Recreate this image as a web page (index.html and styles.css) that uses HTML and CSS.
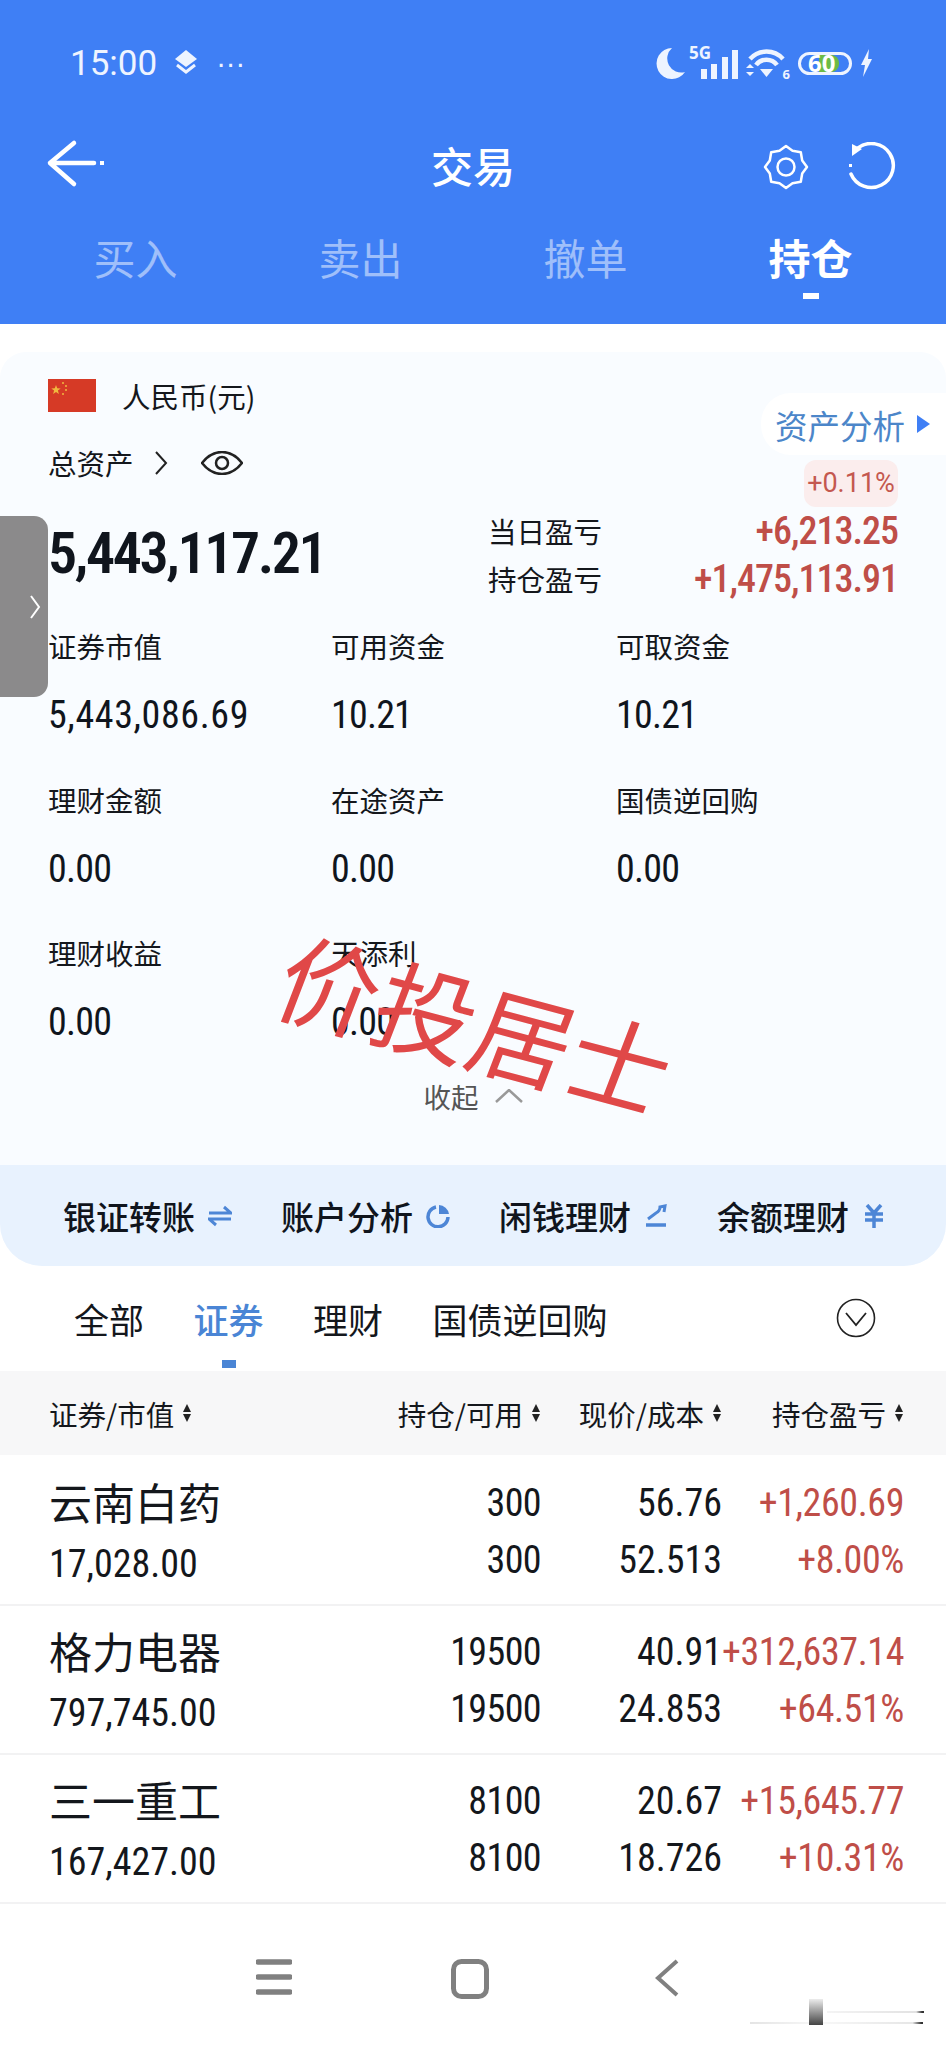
FILE: index.html
```html
<!DOCTYPE html>
<html lang="zh">
<head>
<meta charset="utf-8">
<title>交易</title>
<link rel="stylesheet" href="styles.css">
</head>
<body>
<div class="page">
  <header class="header">
    <div class="status">
      <div class="status-left">
        <span class="time">15:00</span>
        <svg class="layers" viewBox="0 0 24 26"><path d="M12 0 23 9 12 17 1 9Z" fill="#eef4ff"/><path d="M3 15 12 22 21 15" fill="none" stroke="#eef4ff" stroke-width="3"/></svg>
        <span class="dots">···</span>
      </div>
      <div class="status-right">
        <svg class="moon" viewBox="0 0 30 31"><path d="M17 0A15.500 15.500 0 1 0 30 24 14 14 0 0 1 17 0Z" fill="#eef4ff"/></svg>
        <div class="signal">
          <span class="five-g">5G</span>
          <svg class="bars" viewBox="0 0 37 29"><path d="M0 19h6v10H0zM10 14h6v15h-6zM21 7h6v22h-6zM31 0h6v29h-6z" fill="#eef4ff"/></svg>
        </div>
        <div class="wifi">
          <svg viewBox="0 0 41 29"><path d="M4 10A22 22 0 0 1 37 10M10 16A13 13 0 0 1 31 16" fill="none" stroke="#eef4ff" stroke-width="4.500"/><path d="M14 20H27L20.500 28ZM0 19 4 15 8 19ZM0 23 8 23 4 27Z" fill="#eef4ff"/></svg>
          <span class="wifi-num">6</span>
        </div>
        <div class="battery"><span class="battery-fill"></span><span class="battery-num">60</span></div>
        <svg class="bolt" viewBox="0 0 13 28"><path d="M9 0 1 16H5L3 28 12 10H8Z" fill="#eef4ff"/></svg>
      </div>
    </div>
    <nav class="topbar">
      <svg class="back" viewBox="0 0 60 50"><path d="M28 4 4 24 28 45M4 24H48" fill="none" stroke="#fff" stroke-width="4.500" stroke-linecap="round" stroke-linejoin="round"/><rect x="54" y="22" width="4" height="4" fill="#fff"/></svg>
      <h1 class="title">交易</h1>
      <div class="top-actions">
        <svg class="gear" viewBox="0 0 48 48"><path d="M24 3 30.500 7.800 38.800 9.200 40.200 17.500 45 24 40.200 30.500 38.800 38.800 30.500 40.200 24 45 17.500 40.200 9.200 38.800 7.800 30.500 3 24 7.800 17.500 9.200 9.200 17.500 7.800Z" fill="none" stroke="#fff" stroke-width="2.500" stroke-linejoin="round"/><circle cx="24" cy="24" r="8.500" fill="none" stroke="#fff" stroke-width="2.500"/></svg>
        <svg class="refresh" viewBox="0 0 50 50"><path d="M12 6A22 22 0 1 1 5 32" fill="none" stroke="#fff" stroke-width="3.500" stroke-linecap="round"/><path d="M6 2 16 7 6 14Z" fill="#fff"/><rect x="3" y="22" width="3" height="3" fill="#fff"/></svg>
      </div>
    </nav>
    <div class="trade-tabs">
      <span class="trade-tab">买入</span>
      <span class="trade-tab">卖出</span>
      <span class="trade-tab">撤单</span>
      <span class="trade-tab is-active">持仓</span>
    </div>
  </header>

  <section class="card">
    <div class="card-body">
      <div class="side-handle"><svg viewBox="0 0 12 26"><path d="M2 2 10 13 2 24" fill="none" stroke="#fff" stroke-width="2"/></svg></div>
      <div class="hero">
        <div class="hero-left">
          <div class="currency">
            <svg class="flag" viewBox="0 0 48 33"><rect width="48" height="33" fill="#d63a26"/><path d="M8 6l1.200 3.300 3.500.1-2.800 2.100 1 3.400L8 12.900 5.100 14.900l1-3.400-2.800-2.100 3.500-.1Z" fill="#f0b93f"/><circle cx="15" cy="4" r="1" fill="#f0b93f"/><circle cx="18" cy="7" r="1" fill="#f0b93f"/><circle cx="18" cy="11" r="1" fill="#f0b93f"/><circle cx="15" cy="15" r="1" fill="#f0b93f"/></svg>
            <span class="label">人民币(元)</span>
          </div>
          <div class="total">
            <span class="label">总资产</span>
            <svg class="chev" viewBox="0 0 14 24"><path d="M2 1 12 12 2 23" fill="none" stroke="#222" stroke-width="2"/></svg>
            <svg class="eye" viewBox="0 0 42 24"><path d="M1 12C8 3 14 1 21 1S34 3 41 12C34 21 28 23 21 23S8 21 1 12Z" fill="none" stroke="#222" stroke-width="2.500"/><circle cx="21" cy="12" r="6" fill="none" stroke="#222" stroke-width="2.500"/></svg>
          </div>
          <div class="big-number">5,443,117.21</div>
        </div>
        <div class="hero-right">
          <a class="analysis"><span>资产分析</span><i class="tri"></i></a>
          <span class="badge">+0.11%</span>
          <div class="pl-row"><span class="label">当日盈亏</span><span class="pl-value">+6,213.25</span></div>
          <div class="pl-row"><span class="label">持仓盈亏</span><span class="pl-value">+1,475,113.91</span></div>
        </div>
      </div>

      <div class="stats">
        <div class="stat"><span class="label stat-label">证券市值</span><span class="stat-value stat-value-long">5,443,086.69</span></div>
        <div class="stat"><span class="label stat-label">可用资金</span><span class="stat-value">10.21</span></div>
        <div class="stat"><span class="label stat-label">可取资金</span><span class="stat-value">10.21</span></div>
        <div class="stat"><span class="label stat-label">理财金额</span><span class="stat-value">0.00</span></div>
        <div class="stat"><span class="label stat-label">在途资产</span><span class="stat-value">0.00</span></div>
        <div class="stat"><span class="label stat-label">国债逆回购</span><span class="stat-value">0.00</span></div>
        <div class="stat"><span class="label stat-label">理财收益</span><span class="stat-value">0.00</span></div>
        <div class="stat"><span class="label stat-label">天添利</span><span class="stat-value">0.00</span></div>
      </div>
      <div class="watermark">价投居士</div>
      <div class="collapse"><span>收起</span><svg viewBox="0 0 28 14"><path d="M1 13 14 1 27 13" fill="none" stroke="#999" stroke-width="2.500"/></svg></div>
    </div>

    <div class="actions">
      <div class="action"><span>银证转账</span><svg viewBox="0 0 24 20"><path d="M1 7H23L16 1M23 13H1L8 19" fill="none" stroke="#4d86d6" stroke-width="3"/></svg></div>
      <div class="action"><span>账户分析</span><svg viewBox="0 0 24 24"><path d="M10 3A10 10 0 1 0 22 13" fill="none" stroke="#4d86d6" stroke-width="3.500"/><path d="M13 1A11 11 0 0 1 23 10L13 10Z" fill="#4d86d6"/></svg></div>
      <div class="action"><span>闲钱理财</span><svg viewBox="0 0 22 24"><path d="M3 15 11 9Q15 7 15 3L20 2 19 8" fill="none" stroke="#4d86d6" stroke-width="3"/><path d="M1 21H21" fill="none" stroke="#4d86d6" stroke-width="3.500"/></svg></div>
      <div class="action"><span>余额理财</span><svg viewBox="0 0 20 24"><path d="M3 1 10 9 17 1M1 10H19M1 16H19M10 9V24" fill="none" stroke="#4d86d6" stroke-width="3.500"/></svg></div>
    </div>
  </section>

  <div class="hold-tabs">
    <span class="hold-tab">全部</span>
    <span class="hold-tab is-active">证券</span>
    <span class="hold-tab">理财</span>
    <span class="hold-tab">国债逆回购</span>
    <svg class="expand" viewBox="0 0 40 40"><circle cx="20" cy="20" r="18.500" fill="none" stroke="#222" stroke-width="1.600"/><path d="M10 15 20 27 30 15" fill="none" stroke="#222" stroke-width="1.800"/></svg>
  </div>

  <div class="table-head">
    <div class="th th-name">证券/市值<i class="sort"></i></div>
    <div class="th">持仓/可用<i class="sort"></i></div>
    <div class="th">现价/成本<i class="sort"></i></div>
    <div class="th">持仓盈亏<i class="sort"></i></div>
  </div>

  <div class="rows">
    <div class="row">
      <div class="name-cell"><span class="name">云南白药</span><span class="mv">17,028.00</span></div>
      <div class="num-cell qty"><span>300</span><span>300</span></div>
      <div class="num-cell"><span>56.76</span><span>52.513</span></div>
      <div class="num-cell up"><span>+1,260.69</span><span>+8.00%</span></div>
    </div>
    <div class="row">
      <div class="name-cell"><span class="name">格力电器</span><span class="mv">797,745.00</span></div>
      <div class="num-cell qty"><span>19500</span><span>19500</span></div>
      <div class="num-cell"><span>40.91</span><span>24.853</span></div>
      <div class="num-cell up"><span>+312,637.14</span><span>+64.51%</span></div>
    </div>
    <div class="row">
      <div class="name-cell"><span class="name">三一重工</span><span class="mv">167,427.00</span></div>
      <div class="num-cell qty"><span>8100</span><span>8100</span></div>
      <div class="num-cell"><span>20.67</span><span>18.726</span></div>
      <div class="num-cell up"><span>+15,645.77</span><span>+10.31%</span></div>
    </div>
  </div>

  <footer class="sys-nav">
    <svg class="nav-menu" viewBox="0 0 36 36"><path d="M2 3H34M2 18H34M2 33H34" stroke="#808080" stroke-width="5.500" stroke-linecap="round"/></svg>
    <svg class="nav-home" viewBox="0 0 38 40"><rect x="2.500" y="2.500" width="33" height="35" rx="8" fill="none" stroke="#808080" stroke-width="5"/></svg>
    <svg class="nav-back" viewBox="0 0 24 38"><path d="M22 2 3 19 22 36" fill="none" stroke="#808080" stroke-width="4"/></svg>
    <div class="smudge"><span class="smudge-line1"></span><span class="smudge-line2"></span><span class="smudge-bar"></span></div>
  </footer>
</div>
</body>
</html>
```
FILE: styles.css
```css
* { box-sizing: border-box; }
html, body { margin: 0; padding: 0; background: #fff; }
body {
  font-family: Roboto, "Noto Sans CJK SC", sans-serif;
  color: #14171c;
}
.page { position: relative; width: 946px; height: 2048px; overflow: hidden; background: #fff; }

/* header */
.header { height: 324px; background: #3f7ff5; color: #fff; font-family: "Noto Sans CJK SC", sans-serif; }
.status { height: 126px; padding: 0 73px 0 70px; display: flex; justify-content: space-between; align-items: center; }
.status-left { display: flex; align-items: center; }
.time { font-family: Roboto, sans-serif; font-size: 35px; color: #eef4ff; line-height: 40px; padding-top: 1px; }
.layers { width: 24px; height: 26px; margin-left: 17px; }
.dots { margin-left: 18px; font-size: 29px; line-height: 26px; font-family: "Liberation Sans", sans-serif; color: #eef4ff; }
.status-right { display: flex; align-items: center; }
.moon { width: 30px; height: 31px; }
.signal { position: relative; width: 53px; height: 32px; }
.five-g { position: absolute; left: 4px; top: -3px; font: bold 17px/18px "Open Sans", sans-serif; color: #eef4ff; }
.bars { position: absolute; left: 16px; top: 3px; width: 37px; height: 29px; }
.wifi { position: relative; width: 41px; height: 29px; margin-left: 8px; }
.wifi svg { width: 41px; height: 29px; display: block; }
.wifi-num { position: absolute; right: -3px; bottom: -3px; font: bold 13px/14px "Open Sans", sans-serif; color: #eef4ff; }
.battery { position: relative; width: 54px; height: 23px; margin-left: 11px; border: 3px solid #eef4ff; border-radius: 12px; }
.battery-fill { position: absolute; left: 18px; top: 0; bottom: 0; width: 20px; background: #6dbb45; border-radius: 0 8px 8px 0; }
.battery-num { position: absolute; left: 7px; top: -6px; font: bold 24px/28px "Open Sans", sans-serif; color: #fff; }
.bolt { width: 13px; height: 28px; margin-left: 8px; }

.topbar { position: relative; height: 82px; display: flex; align-items: center; justify-content: center; }
.back { position: absolute; left: 46px; top: 13px; width: 60px; height: 50px; }
.title { margin: 0 0 5px; font-size: 42px; font-weight: 500; line-height: 56px; }
.top-actions { position: absolute; right: 50px; top: 16px; display: flex; align-items: center; gap: 36px; }
.gear { width: 48px; height: 48px; }
.refresh { width: 50px; height: 50px; }

.trade-tabs { display: grid; grid-template-columns: repeat(4, 225px); padding: 0 23px; height: 104px; }
.trade-tab { position: relative; text-align: center; font-size: 42px; line-height: 56px; padding-top: 21px; color: rgba(255,255,255,.5); }
.trade-tab.is-active { color: #fff; font-weight: 700; }
.trade-tab.is-active::after { content: ""; position: absolute; left: 105px; top: 85px; width: 16px; height: 6px; background: #fff; }

/* card */
.card { margin-top: 28px; background: #f9fcff; border-radius: 26px 26px 42px 42px; }
.card-body { position: relative; padding: 27px 48px 49px 48px; }
.side-handle { position: absolute; left: 0; top: 164px; width: 48px; height: 181px; background: #8b8a8b; border-radius: 0 14px 14px 0; display: flex; align-items: center; justify-content: flex-end; padding-right: 7px; }
.side-handle svg { width: 12px; height: 26px; }
.label { font-family: "Noto Sans CJK SC", sans-serif; font-size: 28.500px; line-height: 40px; color: #14171c; }
.hero { display: flex; justify-content: space-between; }
.hero-left { display: flex; flex-direction: column; }
.currency { display: flex; align-items: center; height: 33px; gap: 26px; }
.flag { width: 48px; height: 33px; display: block; }
.total { display: flex; align-items: center; height: 32px; margin-top: 35px; }
.chev { width: 14px; height: 24px; margin-left: 20px; }
.eye { width: 42px; height: 24px; margin-left: 33px; }
.big-number { margin-top: 39px; font-size: 58px; line-height: 70px; font-weight: 650; font-stretch: 75%; letter-spacing: -2.400px; color: #10151d; }
.hero-right { width: 410px; display: flex; flex-direction: column; align-items: flex-end; margin-top: 14px; }
.analysis { display: flex; align-items: center; height: 62px; margin-right: -48px; padding: 0 16px 0 14px; background: #fff; border-radius: 30px 0 0 30px; font-family: "Noto Sans CJK SC", sans-serif; font-size: 32.500px; color: #4c86c9; }
.tri { width: 0; height: 0; margin-left: 12px; border-left: 13px solid #3f7ff5; border-top: 9px solid transparent; border-bottom: 9px solid transparent; }
.badge { margin-top: 5px; height: 47px; width: 94px; background: #fbeded; border-radius: 12px; color: #c4584f; font-size: 27px; line-height: 47px; text-align: center; }
.pl-row { align-self: stretch; display: flex; justify-content: space-between; align-items: center; height: 48px; }
.pl-value { font-size: 38px; line-height: 48px; font-weight: 500; font-stretch: 75%; letter-spacing: -1px; color: #bf4e48; }

.stats { display: grid; grid-template-columns: 283px 285px 1fr; row-gap: 40.5px; margin-top: 23px; }
.stat { display: flex; flex-direction: column; gap: 25px; }
.stat-label { height: 40px; }
.stat-value { font-size: 38px; line-height: 48px; height: 48px; font-weight: 450; font-stretch: 75%; letter-spacing: -.8px; color: #10151d; }
.stat-value-long { letter-spacing: .6px; }
.collapse { display: flex; align-items: center; justify-content: center; height: 40px; margin-top: 30px; gap: 16px; font-family: "Noto Sans CJK SC", sans-serif; font-size: 27.500px; color: #555; }
.collapse svg { width: 28px; height: 14px; }
.watermark { position: absolute; left: 303px; top: 566px; font-family: "Noto Sans CJK SC", sans-serif; font-weight: 400; font-size: 100px; line-height: 110px; color: #e04848; white-space: nowrap; transform: rotate(15deg) skewX(-6deg); transform-origin: left top; }

.actions { display: grid; grid-template-columns: repeat(4, 218px); height: 101px; padding-left: 63px; align-items: center; background: #e8f2fe; border-radius: 0 0 42px 42px; }
.action { display: flex; align-items: center; font-family: "Noto Sans CJK SC", sans-serif; font-size: 33px; font-weight: 500; color: #10151d; gap: 13px; }
.action svg { width: 24px; height: 24px; }

/* holdings */
.hold-tabs { position: relative; display: flex; align-items: center; gap: 49.500px; height: 105px; padding-left: 74px; font-family: "Noto Sans CJK SC", sans-serif; font-size: 35px; }
.hold-tab { position: relative; line-height: 48px; }
.hold-tab.is-active { color: #4a85d5; font-weight: 500; }
.hold-tab.is-active::after { content: ""; position: absolute; left: 28px; top: 65px; width: 14px; height: 8px; background: #4a85d5; }
.expand { position: absolute; left: 836px; top: 32px; width: 40px; height: 40px; }

.table-head, .row { display: grid; grid-template-columns: 292px 200px 181px 182px; padding-left: 49px; }
.table-head { height: 84px; align-items: center; background: #f7f7f8; }
.th { display: flex; align-items: center; justify-content: flex-end; font-family: "Noto Sans CJK SC", sans-serif; font-size: 28.500px; white-space: nowrap; }
.th-name { justify-content: flex-start; }
.sort { position: relative; width: 9px; height: 20px; margin-left: 9px; }
.sort::before, .sort::after { content: ""; position: absolute; left: 0; border-left: 4.500px solid transparent; border-right: 4.500px solid transparent; }
.sort::before { top: 1px; border-bottom: 8px solid #222; }
.sort::after { bottom: 1px; border-top: 8px solid #222; }

.rows { padding-top: 2px; }
.row { height: 149px; border-bottom: 2px solid #f2f2f3; }
.name-cell { display: flex; flex-direction: column; padding-top: 15px; }
.name { font-family: "Noto Sans CJK SC", sans-serif; font-size: 43px; line-height: 59px; height: 59px; }
.mv { font-size: 38px; line-height: 58px; height: 58px; font-weight: 450; font-stretch: 75%; white-space: nowrap; margin-top: 4px; }
.num-cell { display: flex; flex-direction: column; align-items: flex-end; padding-top: 18px; font-size: 38px; line-height: 57px; font-weight: 450; font-stretch: 75%; white-space: nowrap; }
.num-cell span { height: 57px; }
.num-cell.qty { letter-spacing: -.6px; }
.num-cell.up { color: #bf4e48; letter-spacing: -.4px; }

/* system nav */
.sys-nav { position: relative; height: 143px; }
.nav-menu, .nav-home, .nav-back { position: absolute; top: 55px; }
.nav-menu { left: 256px; width: 36px; height: 36px; }
.nav-home { left: 451px; width: 38px; height: 40px; }
.nav-back { left: 655px; width: 24px; height: 38px; }
.smudge { position: absolute; left: 750px; top: 93px; width: 175px; height: 32px; }
.smudge-line1, .smudge-line2, .smudge-bar { position: absolute; display: block; }
.smudge-line1 { left: 77px; top: 14px; width: 97px; height: 2px; background: linear-gradient(90deg, #f4f4f4, #e2e2e2 92%, #333 98%); }
.smudge-line2 { left: 0; top: 25px; width: 173px; height: 2px; background: linear-gradient(90deg, #e4e4e4, #f8f8f8 40%, #e6e6e6 94%, #333 99%); }
.smudge-bar { left: 59px; top: 2px; width: 14px; height: 26px; background: linear-gradient(#ececec, #444); }
```
